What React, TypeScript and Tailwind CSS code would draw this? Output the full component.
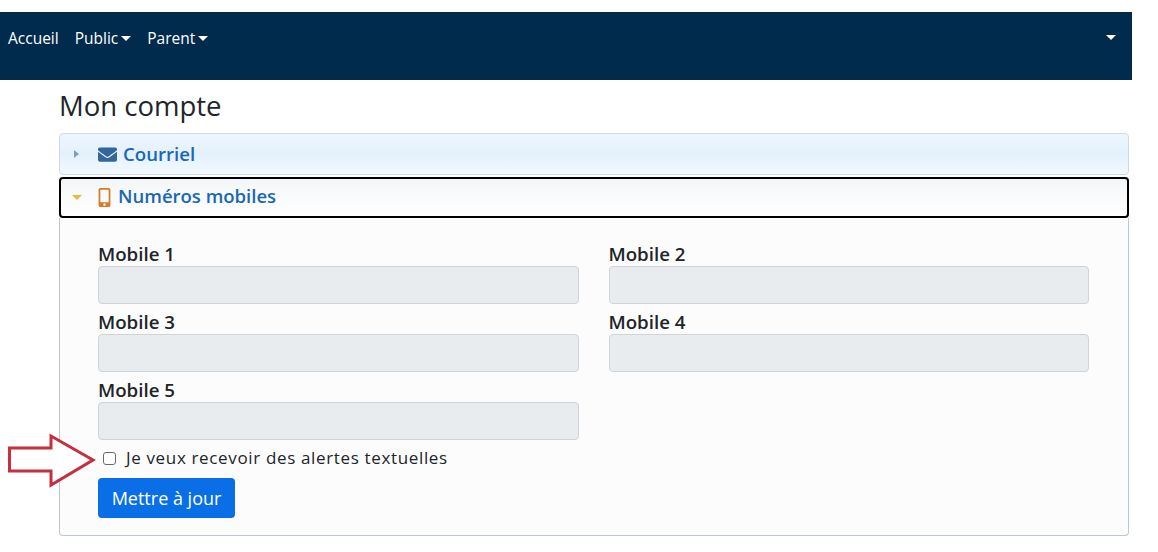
import { FaEnvelope, FaMobileAlt } from 'react-icons/fa';

const fonts = "font-['Open_Sans','Noto_Sans',sans-serif]";

function Caret({ className }: { className: string }) {
  return <span className={`inline-block border-x-[5px] border-t-[5px] border-x-transparent ${className}`} />;
}

function NavLink({ label, caret }: { label: string; caret?: boolean }) {
  return (
    <a className="flex items-center gap-[3px] text-[15.5px] text-white">
      {label}
      {caret && <Caret className="mb-[2px] border-t-white" />}
    </a>
  );
}

function MobileField({ label }: { label: string }) {
  return (
    <div className="h-[68px]">
      <label className="block h-[24px] text-[18.7px] font-semibold leading-[24px] text-[#212529]">{label}</label>
      <div className="h-[38px] rounded-[4px] border border-[#ced4da] bg-[#e9ecef]" />
    </div>
  );
}

export default function App() {
  return (
    <div className={`relative h-[552px] w-[1158px] overflow-hidden bg-white pt-3 ${fonts}`}>
      {/* Top nav */}
      <nav className="flex h-[68px] w-[1132px] items-start justify-between bg-[#002b4d] pl-[8px] pr-[16px] pt-[17px]">
        <div className="flex h-[20px] items-center gap-[16px]">
          <NavLink label="Accueil" />
          <NavLink label="Public" caret />
          <NavLink label="Parent" caret />
        </div>
        <div className="flex h-[16px] items-center">
          <Caret className="border-t-white" />
        </div>
      </nav>

      <main className="ml-[59px] w-[1070px]">
        <h1 className="h-[53px] pt-[8px] text-[27.5px] font-medium leading-[36px] text-[#212529]">Mon compte</h1>

        {/* Courriel header */}
        <div className="flex h-[42px] items-center rounded-[4px] border border-[#cfdbe4] bg-gradient-to-b from-[#eef6fd] via-[#e3f1fc] to-[#f3f9fe] pl-[14px]">
          <span className="inline-block border-y-[4px] border-l-[5px] border-y-transparent border-l-[#7d9fbd]" />
          <FaEnvelope size={19} color="#336699" className="ml-[19px]" />
          <span className="ml-[6px] pb-[1px] text-[18.6px] font-semibold text-[#1a67b8]">Courriel</span>
        </div>

        {/* Numéros mobiles header */}
        <div className="mt-[2px] flex h-[41px] items-center rounded-[4px] border-2 border-black bg-gradient-to-b from-[#f3f6f8] to-white pl-[11px]">
          <Caret className="border-t-[#e8b93a]" />
          <FaMobileAlt size={19} color="#d97b2a" className="ml-[13px]" />
          <span className="ml-[4px] pb-[3px] text-[18.5px] font-semibold text-[#1a67b8]">Numéros mobiles</span>
        </div>

        {/* Panel */}
        <section className="h-[318px] rounded-b-[4px] border border-t-0 border-[#bcc8d4] bg-[#fcfcfd] pl-[38px] pr-[39px] pt-[24px]">
          <div className="grid grid-cols-2 gap-x-[30px]">
            <MobileField label="Mobile 1" />
            <MobileField label="Mobile 2" />
            <MobileField label="Mobile 3" />
            <MobileField label="Mobile 4" />
            <MobileField label="Mobile 5" />
          </div>
          <div className="flex h-[24px] items-center pl-[5px]">
            <span className="h-[13px] w-[13px] rounded-[3px] border border-[#6b6b6b] bg-white" />
            <span className="ml-[10px] text-[17px] tracking-[0.65px] text-[#212529]">Je veux recevoir des alertes textuelles</span>
          </div>
          <button className="mt-[8px] h-[40px] w-[137px] rounded-[4px] bg-[#0a6fe6] text-[18px] font-medium text-white">
            Mettre à jour
          </button>
        </section>
      </main>

      {/* Red annotation arrow */}
      <svg className="absolute left-[8px] top-[433px]" width="88" height="56" viewBox="0 0 88 56">
        <polygon points="1.5,15 43,15 43,3 85,27 43,52 43,38 1.5,38" fill="white" stroke="#c62f3b" strokeWidth="3" />
      </svg>
    </div>
  );
}
